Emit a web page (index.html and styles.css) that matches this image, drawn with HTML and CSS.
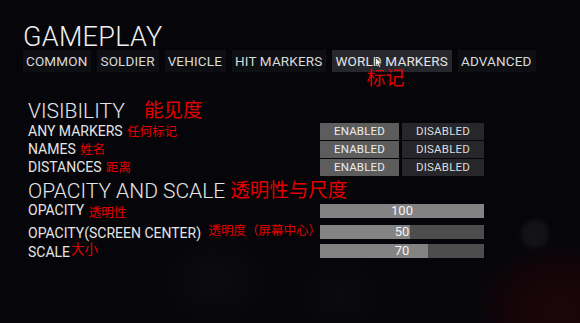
FILE: index.html
```html
<!DOCTYPE html>
<html lang="en">
<head>
<meta charset="utf-8">
<title>Gameplay settings</title>
<link rel="stylesheet" href="styles.css">
</head>
<body>
<div class="screen">
  <header class="header">
    <h1 class="title">GAMEPLAY</h1>
    <nav class="tabs">
      <span class="tab">COMMON</span>
      <span class="tab">SOLDIER</span>
      <span class="tab">VEHICLE</span>
      <span class="tab">HIT MARKERS</span>
      <span class="tab active">WORLD MARKERS
        <svg class="cursor" width="8" height="11" viewBox="0 0 8 11"><path d="M0.5 0.5 L0.5 9 L2.6 7.1 L4.2 10.4 L5.6 9.7 L4.1 6.6 L7 6.4 Z" fill="#f2f2f2" stroke="#222" stroke-width="0.6"/></svg>
        <span class="note tab-note">标记</span>
      </span>
      <span class="tab">ADVANCED</span>
    </nav>
  </header>

  <main class="settings">
    <section class="section">
      <h2 class="section-title">VISIBILITY <span class="note note-big">能见度</span></h2>
      <div class="rows">
        <div class="row">
          <div class="label">ANY MARKERS <span class="note">任何标记</span></div>
          <div class="toggle"><span class="btn on">ENABLED</span><span class="btn off">DISABLED</span></div>
        </div>
        <div class="row">
          <div class="label">NAMES <span class="note">姓名</span></div>
          <div class="toggle"><span class="btn on">ENABLED</span><span class="btn off">DISABLED</span></div>
        </div>
        <div class="row">
          <div class="label">DISTANCES <span class="note">距离</span></div>
          <div class="toggle"><span class="btn on">ENABLED</span><span class="btn off">DISABLED</span></div>
        </div>
      </div>
    </section>

    <section class="section">
      <h2 class="section-title">OPACITY AND SCALE<span class="note note-big tight">透明性与尺度</span></h2>
      <div class="rows sliders">
        <div class="row srow">
          <div class="label">OPACITY <span class="note low">透明性</span></div>
          <div class="bar"><div class="fill" style="width:100%"></div><span class="val">100</span></div>
        </div>
        <div class="row srow">
          <div class="label">OPACITY(SCREEN CENTER) <span class="note high over">透明度（屏幕中心）</span></div>
          <div class="bar"><div class="fill" style="width:55%"></div><span class="val">50</span></div>
        </div>
        <div class="row srow">
          <div class="label">SCALE<span class="note high">大小</span></div>
          <div class="bar"><div class="fill" style="width:66%"></div><span class="val">70</span></div>
        </div>
      </div>
    </section>
  </main>
</div>
</body>
</html>
```

FILE: styles.css
```css
* { box-sizing: border-box; margin: 0; padding: 0; }

html, body {
  width: 580px;
  height: 323px;
  overflow: hidden;
  background: #06060a;
}

.screen {
  position: relative;
  width: 580px;
  height: 323px;
  padding: 24px 0 0 23px;
  font-family: Roboto, "Noto Sans", sans-serif;
  color: #e2e2e2;
  background:
    radial-gradient(circle at 535px 234px, #141418 0, #121216 11px, rgba(18,18,22,0) 17px),
    radial-gradient(ellipse 90px 70px at 560px 310px, #1c0609 0, #140408 55%, rgba(10,4,6,0) 100%),
    radial-gradient(ellipse 60px 50px at 215px 280px, #0c0c10 0, rgba(12,12,16,0) 100%),
    radial-gradient(ellipse 50px 40px at 340px 295px, #0b0b0f 0, rgba(11,11,15,0) 100%),
    #06060a;
}

.header { display: flex; flex-direction: column; }

.title {
  font-weight: 300;
  font-size: 27px;
  line-height: 26px;
  height: 26px;
  color: #f0f0f0;
  letter-spacing: 0.3px;
}

.tabs {
  display: flex;
  gap: 6px;
  height: 22px;
}

.tab {
  position: relative;
  padding: 0 4px 0 3px;
  font-size: 13.5px;
  letter-spacing: 0.15px;
  line-height: 22px;
  color: #d9d9d9;
  background: #0e0f13;
  white-space: nowrap;
}

.tab.active { background: #27282d; color: #e4e4e4; }

.cursor {
  position: absolute;
  left: 43px;
  top: 7px;
}

.note {
  font-family: "Noto Sans CJK SC", "Noto Sans", sans-serif;
  color: #e00000;
  font-size: 12.5px;
  font-weight: 400;
  letter-spacing: 0;
}

.tab-note {
  position: absolute;
  left: 34px;
  top: 16px;
  font-size: 19px;
  line-height: 22px;
}

.settings {
  margin-top: 24px;
  padding-left: 5px;
}

.section-title {
  font-weight: 300;
  font-size: 21px;
  line-height: 26px;
  height: 26px;
  color: #e6e6e6;
  white-space: nowrap;
}

.note-big { font-size: 19.5px; margin-left: 14px; vertical-align: 1px; }
.note-big.tight { margin-left: 5px; }

.rows {
  display: flex;
  flex-direction: column;
  gap: 1px;
  margin-bottom: 1px;
}

.row {
  display: grid;
  grid-template-columns: 292px 164px;
  align-items: center;
  height: 17px;
}

.label {
  font-size: 14px;
  line-height: 17px;
  white-space: nowrap;
  color: #e4e4e4;
  position: relative;
  z-index: 2;
}

.label .note { margin-left: 1px; }
.label .note.low { vertical-align: -2px; }
.label .note.high { vertical-align: 3px; font-size: 13.5px; }
.label .note.over { font-size: 12.5px; vertical-align: 3px; margin-left: 4px; }

.toggle {
  display: grid;
  grid-template-columns: 79px 82px;
  gap: 3px;
  height: 17px;
}

.btn {
  font-size: 11.5px;
  line-height: 17px;
  text-align: center;
  letter-spacing: 0.2px;
}

.btn.on { background: #5d5d5d; color: #ececec; }
.btn.off { background: #27272b; color: #dcdcdc; }

.sliders { gap: 1px; }
.srow { height: 18px; }

.bar {
  position: relative;
  height: 14px;
  background: #4d4d4d;
  z-index: 1;
}

.fill {
  height: 100%;
  background: #838383;
}

.val {
  position: absolute;
  inset: 0;
  text-align: center;
  font-size: 13px;
  line-height: 14px;
  color: #f4f4f4;
}
```
